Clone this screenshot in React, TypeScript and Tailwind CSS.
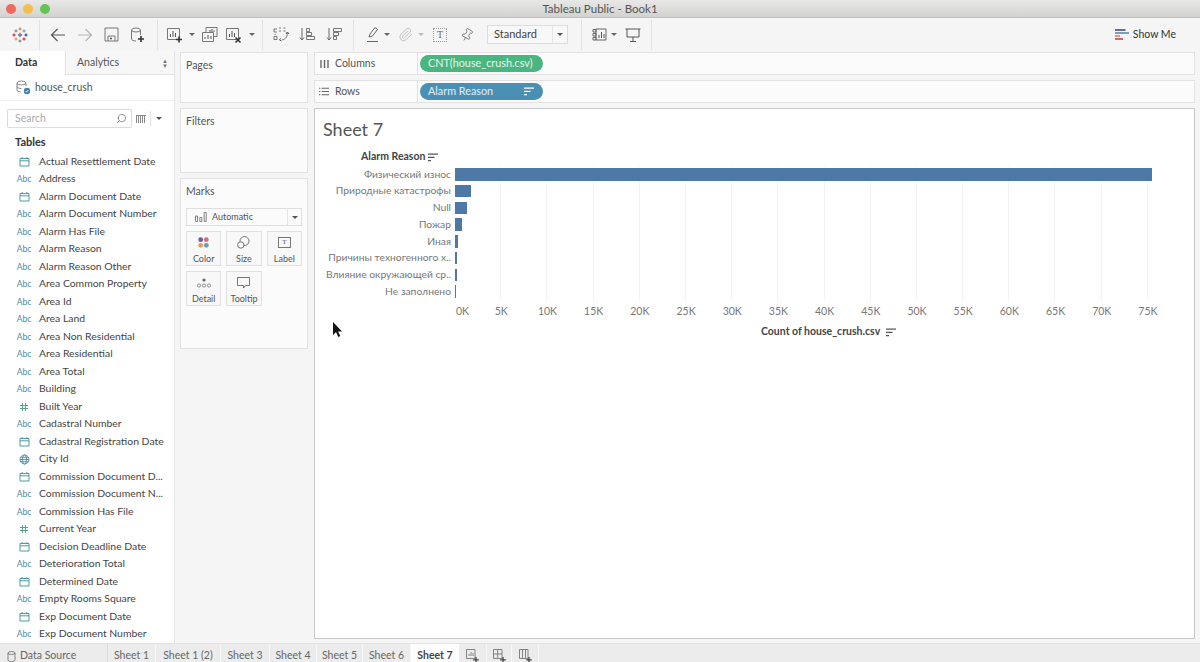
import type { ReactNode } from 'react';
import { Paperclip, Pin, Search } from 'lucide-react';

type FieldKind = 'abc' | 'date' | 'num' | 'geo';

const fields: [FieldKind, string][] = [
  ['date', 'Actual Resettlement Date'],
  ['abc', 'Address'],
  ['date', 'Alarm Document Date'],
  ['abc', 'Alarm Document Number'],
  ['abc', 'Alarm Has File'],
  ['abc', 'Alarm Reason'],
  ['abc', 'Alarm Reason Other'],
  ['abc', 'Area Common Property'],
  ['abc', 'Area Id'],
  ['abc', 'Area Land'],
  ['abc', 'Area Non Residential'],
  ['abc', 'Area Residential'],
  ['abc', 'Area Total'],
  ['abc', 'Building'],
  ['num', 'Built Year'],
  ['abc', 'Cadastral Number'],
  ['date', 'Cadastral Registration Date'],
  ['geo', 'City Id'],
  ['date', 'Commission Document D...'],
  ['abc', 'Commission Document N...'],
  ['abc', 'Commission Has File'],
  ['num', 'Current Year'],
  ['date', 'Decision Deadline Date'],
  ['abc', 'Deterioration Total'],
  ['date', 'Determined Date'],
  ['abc', 'Empty Rooms Square'],
  ['date', 'Exp Document Date'],
  ['abc', 'Exp Document Number'],
];

const bars = [
  { label: 'Физический износ', width: 697 },
  { label: 'Природные катастрофы', width: 16 },
  { label: 'Null', width: 12 },
  { label: 'Пожар', width: 7 },
  { label: 'Иная', width: 2.5 },
  { label: 'Причины техногенного х..', width: 1.5 },
  { label: 'Влияние окружающей ср..', width: 1.5 },
  { label: 'Не заполнено', width: 0.7 },
];

const ticks = ['5K', '10K', '15K', '20K', '25K', '30K', '35K', '40K', '45K', '50K', '55K', '60K', '65K', '70K', '75K'];
const tabs = [
  { name: 'Sheet 1', w: 'w-[48px]' },
  { name: 'Sheet 1 (2)', w: 'w-[65px]' },
  { name: 'Sheet 3', w: 'w-[49px]' },
  { name: 'Sheet 4', w: 'w-[47px]' },
  { name: 'Sheet 5', w: 'w-[46px]' },
  { name: 'Sheet 6', w: 'w-[48px]' },
];

function Ico({ children, w = 18, h = 18, className = '' }: { children: ReactNode; w?: number; h?: number; className?: string }) {
  return (
    <svg width={w} height={h} viewBox={`0 0 ${w} ${h}`} fill="none" stroke="#666" strokeWidth="1" className={className}>
      {children}
    </svg>
  );
}

function Caret() {
  return <span className="block shrink-0 w-0 h-0 border-x-[3px] border-x-transparent border-t-[3px] border-t-[#666]" />;
}

function Sep() {
  return <div className="w-px h-[30px] bg-[#e2e2e2] shrink-0" />;
}

function Slot({ w, children }: { w: string; children: ReactNode }) {
  return <div className={`${w} shrink-0 flex items-center justify-center`}>{children}</div>;
}

function Logo() {
  const c = ['#e8762d', '#5b879b', '#c72035', '#1f447e', '#59879b', '#7099a6', '#eb912b', '#c72035'];
  const p = [[8, 2], [8, 14], [2, 8], [14, 8], [4, 4], [12, 4], [4, 12], [12, 12]];
  return (
    <svg width="16" height="16" viewBox="0 0 16 16">
      {p.map(([x, y], i) => (
        <g key={i} stroke={c[i]} strokeWidth="1.1">
          <path d={`M${x - 1.6} ${y}h3.2M${x} ${y - 1.6}v3.2`} />
        </g>
      ))}
      <path d="M5.8 8h4.4M8 5.8v4.4" stroke="#7b6d9f" strokeWidth="1.3" />
    </svg>
  );
}

function ChartPlus({ badge }: { badge: 'plus' | 'x' }) {
  return (
    <Ico>
      <path d="M1.5 2.5h12v11h-12z" stroke="#777" />
      <path d="M4.5 11V8M7 11V5M9.5 11V7" stroke="#555" />
      {badge === 'plus' ? (
        <path d="M13 10.5v6M10 13.5h6" stroke="#333" strokeWidth="1.6" />
      ) : (
        <path d="M10.5 11.5l5 5M15.5 11.5l-5 5" stroke="#333" strokeWidth="1.6" />
      )}
    </Ico>
  );
}

function SortIcon({ color = '#555', w = 10 }: { color?: string; w?: number }) {
  return (
    <svg width={w} height="9" viewBox="0 0 10 9" fill="none" stroke={color} strokeWidth="1.3">
      <path d="M0 1.2h10M0 4.4h6.5M0 7.6h3" />
    </svg>
  );
}

function Toolbar() {
  return (
    <div className="h-[33px] bg-[#f5f5f5] flex items-center shrink-0">
      <Slot w="w-[39px]"><Logo /></Slot>
      <Sep />
      <Slot w="w-[36px]">
        <Ico w={16} h={14}><path d="M15 7H1.5M7.5 1L1.5 7l6 6" stroke="#555" strokeWidth="1.2" /></Ico>
      </Slot>
      <Slot w="w-[18px]">
        <Ico w={16} h={14}><path d="M1 7h13.5M8.5 1l6 6-6 6" stroke="#b5b5b5" strokeWidth="1.2" /></Ico>
      </Slot>
      <Slot w="w-[34px]">
        <Ico w={15} h={15}><path d="M1 1h13v13H1zM4 14V9h7v5" stroke="#777" /><path d="M6 11.5h2" stroke="#555" strokeWidth="1.5" /></Ico>
      </Slot>
      <Slot w="w-[19px]">
        <Ico>
          <ellipse cx="7" cy="4" rx="4.5" ry="2" stroke="#777" />
          <path d="M2.5 4v9c0 1 2 2 4.5 2M11.5 4v5" stroke="#777" />
          <path d="M12 10v6M9 13h6" stroke="#333" strokeWidth="1.6" />
        </Ico>
      </Slot>
      <div className="w-[10px] shrink-0" />
      <Sep />
      <div className="w-[6px] shrink-0" />
      <Slot w="w-[22px]"><ChartPlus badge="plus" /></Slot>
      <Slot w="w-[11px]"><Caret /></Slot>
      <Slot w="w-[26px]">
        <Ico>
          <path d="M5 1.5h11v9H5z" stroke="#777" />
          <path d="M1.5 6.5h11v9h-11z" stroke="#777" fill="#f5f5f5" />
          <path d="M9 6V4M11 6V3M13 6V4.5M4 13v-2M7 13V9M10 13v-3" stroke="#555" />
        </Ico>
      </Slot>
      <Slot w="w-[22px]"><ChartPlus badge="x" /></Slot>
      <Slot w="w-[14px]"><Caret /></Slot>
      <div className="w-[3px] shrink-0" />
      <Sep />
      <Slot w="w-[36px]">
        <Ico>
          <path d="M2 3h3M2 6h3M2 3v3M7 2h2M7 5h2M11.5 2h2M11.5 5h2" stroke="#777" />
          <path d="M2 10.5h3v3H2zM3 8v1M15 6c1 4-1 7-5 8" stroke="#777" />
          <path d="M8.5 12.5l-1 1.5 2 1M14 8l1.5-2 1.5 2" stroke="#555" />
        </Ico>
      </Slot>
      <Slot w="w-[18px]">
        <Ico>
          <path d="M3 2v12M1 11.5L3 14l2-2.5" stroke="#666" />
          <path d="M7.5 2.5h3v3h-3zM7.5 6.5h5v3h-5zM7.5 10.5h8v3h-8z" stroke="#777" />
        </Ico>
      </Slot>
      <Slot w="w-[36px]">
        <Ico>
          <path d="M3 2v12M1 11.5L3 14l2-2.5" stroke="#666" />
          <path d="M7.5 2.5h8v3h-8zM7.5 6.5h5v3h-5zM7.5 10.5h3v3h-3z" stroke="#777" />
        </Ico>
      </Slot>
      <Sep />
      <div className="w-[6px] shrink-0" />
      <Slot w="w-[26px]">
        <Ico>
          <path d="M5 11l1-3 5-6.500 2.500 2L8.500 10zM3 15.500h11" stroke="#666" />
        </Ico>
      </Slot>
      <Slot w="w-[2px]"><Caret /></Slot>
      <div className="w-[4px] shrink-0" />
      <Slot w="w-[26px]"><Paperclip size={15} color="#bdbdbd" strokeWidth={1.5} /></Slot>
      <Slot w="w-[6px]"><span className="block w-0 h-0 border-x-[3px] border-x-transparent border-t-[3px] border-t-[#bbb]" /></Slot>
      <Slot w="w-[32px]">
        <div className="w-[14px] h-[14px] border border-dotted border-[#999] flex items-center justify-center text-[10px] leading-none text-[#666] font-['Liberation_Serif',serif]">T</div>
      </Slot>
      <Slot w="w-[21px]"><Pin size={14} color="#666" strokeWidth={1.3} className="rotate-[30deg]" /></Slot>
      <div className="w-[10px] shrink-0" />
      <div className="w-[81px] h-[19px] bg-[#f8f8f8] border border-[#ddd] flex items-center shrink-0">
        <span className="flex-1 pl-[6px] text-[11px] text-[#444]">Standard</span>
        <div className="w-[15px] h-full border-l border-[#e6e6e6] flex items-center justify-center">
          <span className="block w-0 h-0 border-x-[3.5px] border-x-transparent border-t-[3.5px] border-t-[#555]" />
        </div>
      </div>
      <div className="w-[13px] shrink-0" />
      <Sep />
      <div className="w-[5px] shrink-0" />
      <Slot w="w-[26px]">
        <Ico>
          <path d="M2 3.500h3v2.500H2zM2 7.500h3V10H2zM2 11.500h3V14H2zM5 3h10v11H5z" stroke="#666" />
          <path d="M8 12V9M10.500 12V6M13 12V8" stroke="#555" />
        </Ico>
      </Slot>
      <Slot w="w-[2px]"><Caret /></Slot>
      <Slot w="w-[36px]">
        <Ico>
          <path d="M1.500 3h15M3 3v8h12V3M9 11v4M6 15.500h6" stroke="#555" />
        </Ico>
      </Slot>
      <Sep />
      <div className="flex-1" />
      <div className="flex items-center gap-[4px] mr-[24px]">
        <svg width="14" height="14" viewBox="0 0 14 14">
          <rect x="0" y="1" width="10.500" height="2" fill="#6f6c8f" />
          <rect x="0" y="4" width="14" height="2" fill="#7c9cc0" />
          <rect x="0" y="7" width="5" height="2" fill="#eb9a62" />
          <rect x="0" y="10" width="8" height="2" fill="#d76373" />
        </svg>
        <span className="text-[10.5px] text-[#333]">Show Me</span>
      </div>
    </div>
  );
}

function FieldIcon({ kind }: { kind: FieldKind }) {
  if (kind === 'abc') {
    return <span className="text-[8.5px] text-[#4f8aa3] leading-none">Abc</span>;
  }
  if (kind === 'num') {
    return (
      <svg width="10" height="10" viewBox="0 0 10 10" fill="none" stroke="#5aa58d" strokeWidth="1">
        <path d="M3.500 1v8M6.500 1v8M1 3.500h8M1 6.500h8" />
      </svg>
    );
  }
  if (kind === 'geo') {
    return (
      <svg width="11" height="11" viewBox="0 0 11 11" fill="none" stroke="#4f8aa3" strokeWidth="0.9">
        <circle cx="5.500" cy="5.500" r="4.500" />
        <ellipse cx="5.500" cy="5.500" rx="2" ry="4.500" />
        <path d="M1 5.500h9M1.600 3.300h7.800M1.600 7.700h7.800" />
      </svg>
    );
  }
  return (
    <svg width="11" height="11" viewBox="0 0 11 11" fill="none" stroke="#4f9aa3" strokeWidth="1">
      <path d="M1 2.500h9V10H1zM1 4.800h9M3.200 1v2M7.800 1v2" />
    </svg>
  );
}

function DataPanel() {
  return (
    <div className="w-[175px] shrink-0 bg-white border-r border-[#e4e4e4] flex flex-col overflow-hidden">
      <div className="h-[24px] flex shrink-0 text-[10.5px]">
        <div className="w-[65px] flex items-center pl-[15px] font-bold text-[#333]">Data</div>
        <div className="flex-1 flex items-center justify-between pl-[11px] pr-[6px] bg-[#f7f7f7] border-l border-b border-[#e2e2e2] text-[#555]">
          <span>Analytics</span>
          <span className="text-[6px] leading-[5px] text-[#777] flex flex-col items-center"><span>▲</span><span>▼</span></span>
        </div>
      </div>
      <div className="h-[26px] flex items-center pl-[16px] gap-[4px] border-b border-[#f0f0f0] shrink-0">
        <svg width="15" height="15" viewBox="0 0 15 15" fill="none" stroke="#777" strokeWidth="0.9">
          <ellipse cx="5.500" cy="3" rx="4.500" ry="2" />
          <path d="M1 3v7c0 1 1.500 1.700 3.500 1.900M10 3v3M1 6.500c0 1 2 2 4.500 2" />
          <circle cx="11" cy="11" r="3.200" fill="#3f83ad" stroke="none" />
          <path d="M9.600 11l1 1 1.800-2" stroke="#fff" />
        </svg>
        <span className="text-[10.5px] text-[#555]">house_crush</span>
      </div>
      <div className="h-[19px] mt-[8px] flex items-center shrink-0">
        <div className="ml-[7px] w-[125px] h-[19px] border border-[#dcdcdc] rounded-[2px] flex items-center justify-between pl-[7px] pr-[4px] shadow-[0_0_1px_#ddd]">
          <span className="text-[10.5px] text-[#aaa]">Search</span>
          <Search size={11} color="#666" strokeWidth={1.5} className="-scale-x-100" />
        </div>
        <div className="ml-[4px] flex items-center">
          <svg width="10" height="8" viewBox="0 0 10 8" fill="none" stroke="#888" strokeWidth="1">
            <path d="M.5 0v8M2.500 0v8M4.500 0v8M6.500 0v8M8.500 0v8M0 .5h10" />
          </svg>
          <div className="w-px h-[15px] bg-[#e2e2e2] ml-[4px] mr-[5px]" />
          <span className="block w-0 h-0 border-x-[3.5px] border-x-transparent border-t-[3.5px] border-t-[#555]" />
        </div>
      </div>
      <div className="pl-[15px] mt-[6px] text-[11px] font-bold leading-[16px] text-[#333] shrink-0">Tables</div>
      <div className="mt-[3px] flex-1 overflow-hidden">
        {fields.map(([kind, name], i) => (
          <div key={i} className="h-[17.5px] flex items-center">
            <div className="w-[39px] pl-[17px] shrink-0 flex justify-start items-center">
              <span className="w-[14px] flex justify-center"><FieldIcon kind={kind} /></span>
            </div>
            <span className="text-[10.4px] text-[#444] whitespace-nowrap">{name}</span>
          </div>
        ))}
      </div>
    </div>
  );
}

function MarkButton({ label, icon }: { label: string; icon: ReactNode }) {
  return (
    <div className="h-[35px] bg-[#f8f8f8] border border-[#e0e0e0] flex flex-col items-center justify-center gap-[3px] pt-[3px]">
      <div className="h-[14px] flex items-center">{icon}</div>
      <span className="text-[9px] leading-[12px] text-[#555]">{label}</span>
    </div>
  );
}

function Card({ title, className, children }: { title: string; className: string; children?: ReactNode }) {
  return (
    <div className={`bg-[#fbfbfb] border border-[#e2e2e2] px-[5px] ${className}`}>
      <div className="text-[10.5px] text-[#555] leading-[14px] mt-[5px]">{title}</div>
      {children}
    </div>
  );
}

function CardsColumn() {
  return (
    <div className="w-[128px] shrink-0 ml-[5px] flex flex-col gap-[5px] pt-[1px]">
      <Card title="Pages" className="h-[51px]" />
      <Card title="Filters" className="h-[65px]" />
      <Card title="Marks" className="h-[171px]">
        <div className="mt-[10px] h-[18px] border border-[#dedede] bg-[#fbfbfb] flex items-center">
          <div className="flex-1 flex items-center gap-[5px] pl-[8px]">
            <svg width="12" height="10" viewBox="0 0 12 10" fill="none" stroke="#777" strokeWidth="0.9">
              <path d="M.5 4h2v5.500h-2zM4.800 5.500h2v4h-2zM9.200.5h2v9h-2z" />
            </svg>
            <span className="text-[9px] text-[#555]">Automatic</span>
          </div>
          <div className="w-[14px] h-full border-l border-[#e6e6e6] flex items-center justify-center">
            <span className="block w-0 h-0 border-x-[3px] border-x-transparent border-t-[3px] border-t-[#555]" />
          </div>
        </div>
        <div className="mt-[5px] grid grid-cols-3 gap-x-[5px] gap-y-[5px]">
          <MarkButton
            label="Color"
            icon={
              <svg width="11" height="11" viewBox="0 0 11 11">
                <circle cx="2.700" cy="2.700" r="2.400" fill="#6f5f8f" />
                <circle cx="8.300" cy="2.700" r="2.400" fill="#d56a7a" />
                <circle cx="2.700" cy="8.300" r="2.400" fill="#ec9a55" />
                <circle cx="8.300" cy="8.300" r="2.400" fill="#6b9cc0" />
              </svg>
            }
          />
          <MarkButton
            label="Size"
            icon={
              <svg width="13" height="13" viewBox="0 0 13 13" fill="none" stroke="#666" strokeWidth="0.9">
                <circle cx="7.500" cy="5" r="4.500" />
                <circle cx="3.800" cy="9" r="3.200" fill="#f8f8f8" />
              </svg>
            }
          />
          <MarkButton
            label="Label"
            icon={
              <div className="w-[13px] h-[11px] border border-[#777] flex items-center justify-center text-[7px] leading-none text-[#555] font-['Liberation_Serif',serif]">T</div>
            }
          />
          <MarkButton
            label="Detail"
            icon={
              <svg width="14" height="10" viewBox="0 0 14 10" fill="none" stroke="#777" strokeWidth="0.8">
                <circle cx="7" cy="2" r="1.600" fill="#666" stroke="none" />
                <circle cx="2" cy="7.500" r="1.600" />
                <circle cx="7" cy="7.500" r="1.600" />
                <circle cx="12" cy="7.500" r="1.600" />
              </svg>
            }
          />
          <MarkButton
            label="Tooltip"
            icon={
              <svg width="13" height="12" viewBox="0 0 13 12" fill="none" stroke="#666" strokeWidth="0.9">
                <path d="M.5.5h12v8H8.500L6.500 11V8.500H.5z" />
              </svg>
            }
          />
        </div>
      </Card>
    </div>
  );
}

function Shelf({ label, icon, color, pill, sorted }: { label: string; icon: ReactNode; color: string; pill: string; sorted?: boolean }) {
  return (
    <div className="h-[23px] bg-[#fbfbfb] border border-[#e2e2e2] flex items-center">
      <div className="w-[103px] h-full border-r border-[#e2e2e2] flex items-center pl-[4px] gap-[6px] text-[10.5px] text-[#555]">
        <span className="w-[10px] flex justify-center">{icon}</span>
        <span>{label}</span>
      </div>
      <div className={`${color} ml-[2px] w-[123px] h-[17px] rounded-full flex items-center justify-between pl-[8px] pr-[9px] text-[10.8px] text-white/85 whitespace-nowrap`}>
        <span>{pill}</span>
        {sorted ? <SortIcon color="#fff" /> : null}
      </div>
    </div>
  );
}

function Chart() {
  return (
    <div className="relative flex-1 bg-white border border-[#c9c9c9] overflow-hidden">
      <div className="pl-[8px] pt-[10px] text-[18px] leading-[20px] text-[#555]">Sheet 7</div>
      <div className="mt-[10px] ml-[46px] h-[16px] flex items-center gap-[3px] text-[10.5px] font-bold text-[#444]">
        Alarm Reason <SortIcon />
      </div>
      <div className="relative mt-[1px]">
        <div className="absolute left-[140px] top-0 h-[134px] flex">
          {ticks.map((t) => (
            <div key={t} className="w-[46.2px] h-full border-r border-[#f2f2f2]" />
          ))}
        </div>
        {bars.map((b) => (
          <div key={b.label} className="relative h-[16.75px] flex items-center">
            <div className="w-[136px] text-right text-[10.3px] text-[#777] whitespace-nowrap">{b.label}</div>
            <div className="ml-[4px] h-[12.5px] bg-[#4e79a7]" style={{ width: b.width }} />
          </div>
        ))}
      </div>
      <div className="ml-[140px] mt-[4px] h-[14px] flex text-[10.5px] text-[#777]">
        <div className="w-[46.2px] pl-[1px]">0K</div>
        {ticks.map((t) => (
          <div key={t} className="w-[46.2px] -translate-x-[23px] text-center">{t}</div>
        ))}
      </div>
      <div className="ml-[446px] mt-[7px] h-[14px] flex items-center gap-[6px] text-[10.5px] font-bold text-[#444]">
        Count of house_crush.csv <SortIcon />
      </div>
      <svg width="10" height="16" viewBox="0 0 10 16" className="absolute left-[17px] top-[213px]">
        <path d="M1 0v13l3-3 2.300 5 2-1-2.300-4.500H10z" fill="#111" />
      </svg>
    </div>
  );
}

function BottomBar() {
  return (
    <div className="h-[19px] bg-[#ececec] border-t border-[#e2e2e2] flex items-stretch shrink-0 text-[10.5px] text-[#666]">
      <div className="w-[108px] flex items-center pl-[7px] pt-[6px] gap-[4px] border-r border-[#dcdcdc]">
        <svg width="9" height="11" viewBox="0 0 9 11" fill="none" stroke="#777" strokeWidth="0.9">
          <ellipse cx="4.500" cy="2" rx="3.500" ry="1.500" />
          <path d="M1 2v7c0 .8 1.500 1.500 3.500 1.500S8 9.800 8 9V2" />
        </svg>
        <span>Data Source</span>
      </div>
      {tabs.map((t) => (
        <div key={t.name} className={`${t.w} flex items-center justify-center pt-[6px] border-r border-[#f7f7f7]`}>{t.name}</div>
      ))}
      <div className="w-[48px] bg-white flex items-center justify-center pt-[6px] font-bold text-[#444]">Sheet 7</div>
      {['w-[28px]', 'w-[25px]', 'w-[27px]'].map((w, i) => (
        <div key={w} className={`${w} flex items-center justify-center pt-[5px] border-r border-[#f7f7f7]`}>
          <svg width="15" height="15" viewBox="0 0 15 15" fill="none" stroke="#777" strokeWidth="0.9">
            <path d="M1.500 1.500h8.500v9h-8.500z" />
            {i === 0 ? <path d="M4 8V6M6 8V4M8 8V5" /> : null}
            {i === 1 ? <path d="M1.500 6h8.500M5.700 1.500v9" /> : null}
            {i === 2 ? <path d="M4.500 1.500v9M7.500 1.500v9" /> : null}
            <path d="M11 9v5.500M8.200 11.800h5.600" stroke="#444" strokeWidth="1.300" />
          </svg>
        </div>
      ))}
    </div>
  );
}

export default function App() {
  return (
    <div className="w-[1200px] h-[662px] overflow-hidden flex flex-col bg-[#f5f5f5] font-['Lato','Noto_Sans',sans-serif]">
      <div className="h-[18px] shrink-0 bg-gradient-to-b from-[#e8e8e6] to-[#d2d3d0] border-b border-[#bdbdbd] relative flex items-center justify-center">
        <div className="absolute left-[6px] top-[3.500px] flex gap-[7px]">
          <span className="w-[10px] h-[10px] rounded-full bg-[#ec6a5e]" />
          <span className="w-[10px] h-[10px] rounded-full bg-[#f4bf4f]" />
          <span className="w-[10px] h-[10px] rounded-full bg-[#61c554]" />
        </div>
        <span className="text-[11.5px] text-[#555]">Tableau Public - Book1</span>
      </div>
      <Toolbar />
      <div className="flex-1 flex min-h-0">
        <DataPanel />
        <CardsColumn />
        <div className="flex-1 ml-[6px] mr-[5px] mb-[4px] pt-[1px] flex flex-col gap-[5px] min-w-0">
          <Shelf
            label="Columns"
            color="bg-[#4bb580]"
            pill="CNT(house_crush.csv)"
            icon={
              <svg width="9" height="9" viewBox="0 0 9 9" fill="none" stroke="#666" strokeWidth="1.400">
                <path d="M1 1v8M4.500 1v8M8 1v8" />
              </svg>
            }
          />
          <Shelf
            label="Rows"
            color="bg-[#4a90b4]"
            pill="Alarm Reason"
            sorted
            icon={
              <svg width="11" height="9" viewBox="0 0 11 9" fill="none" stroke="#666" strokeWidth="1.200">
                <path d="M0 1h1.500M3 1h8M0 4.500h1.500M3 4.500h8M0 8h1.500M3 8h8" />
              </svg>
            }
          />
          <Chart />
        </div>
      </div>
      <BottomBar />
    </div>
  );
}
